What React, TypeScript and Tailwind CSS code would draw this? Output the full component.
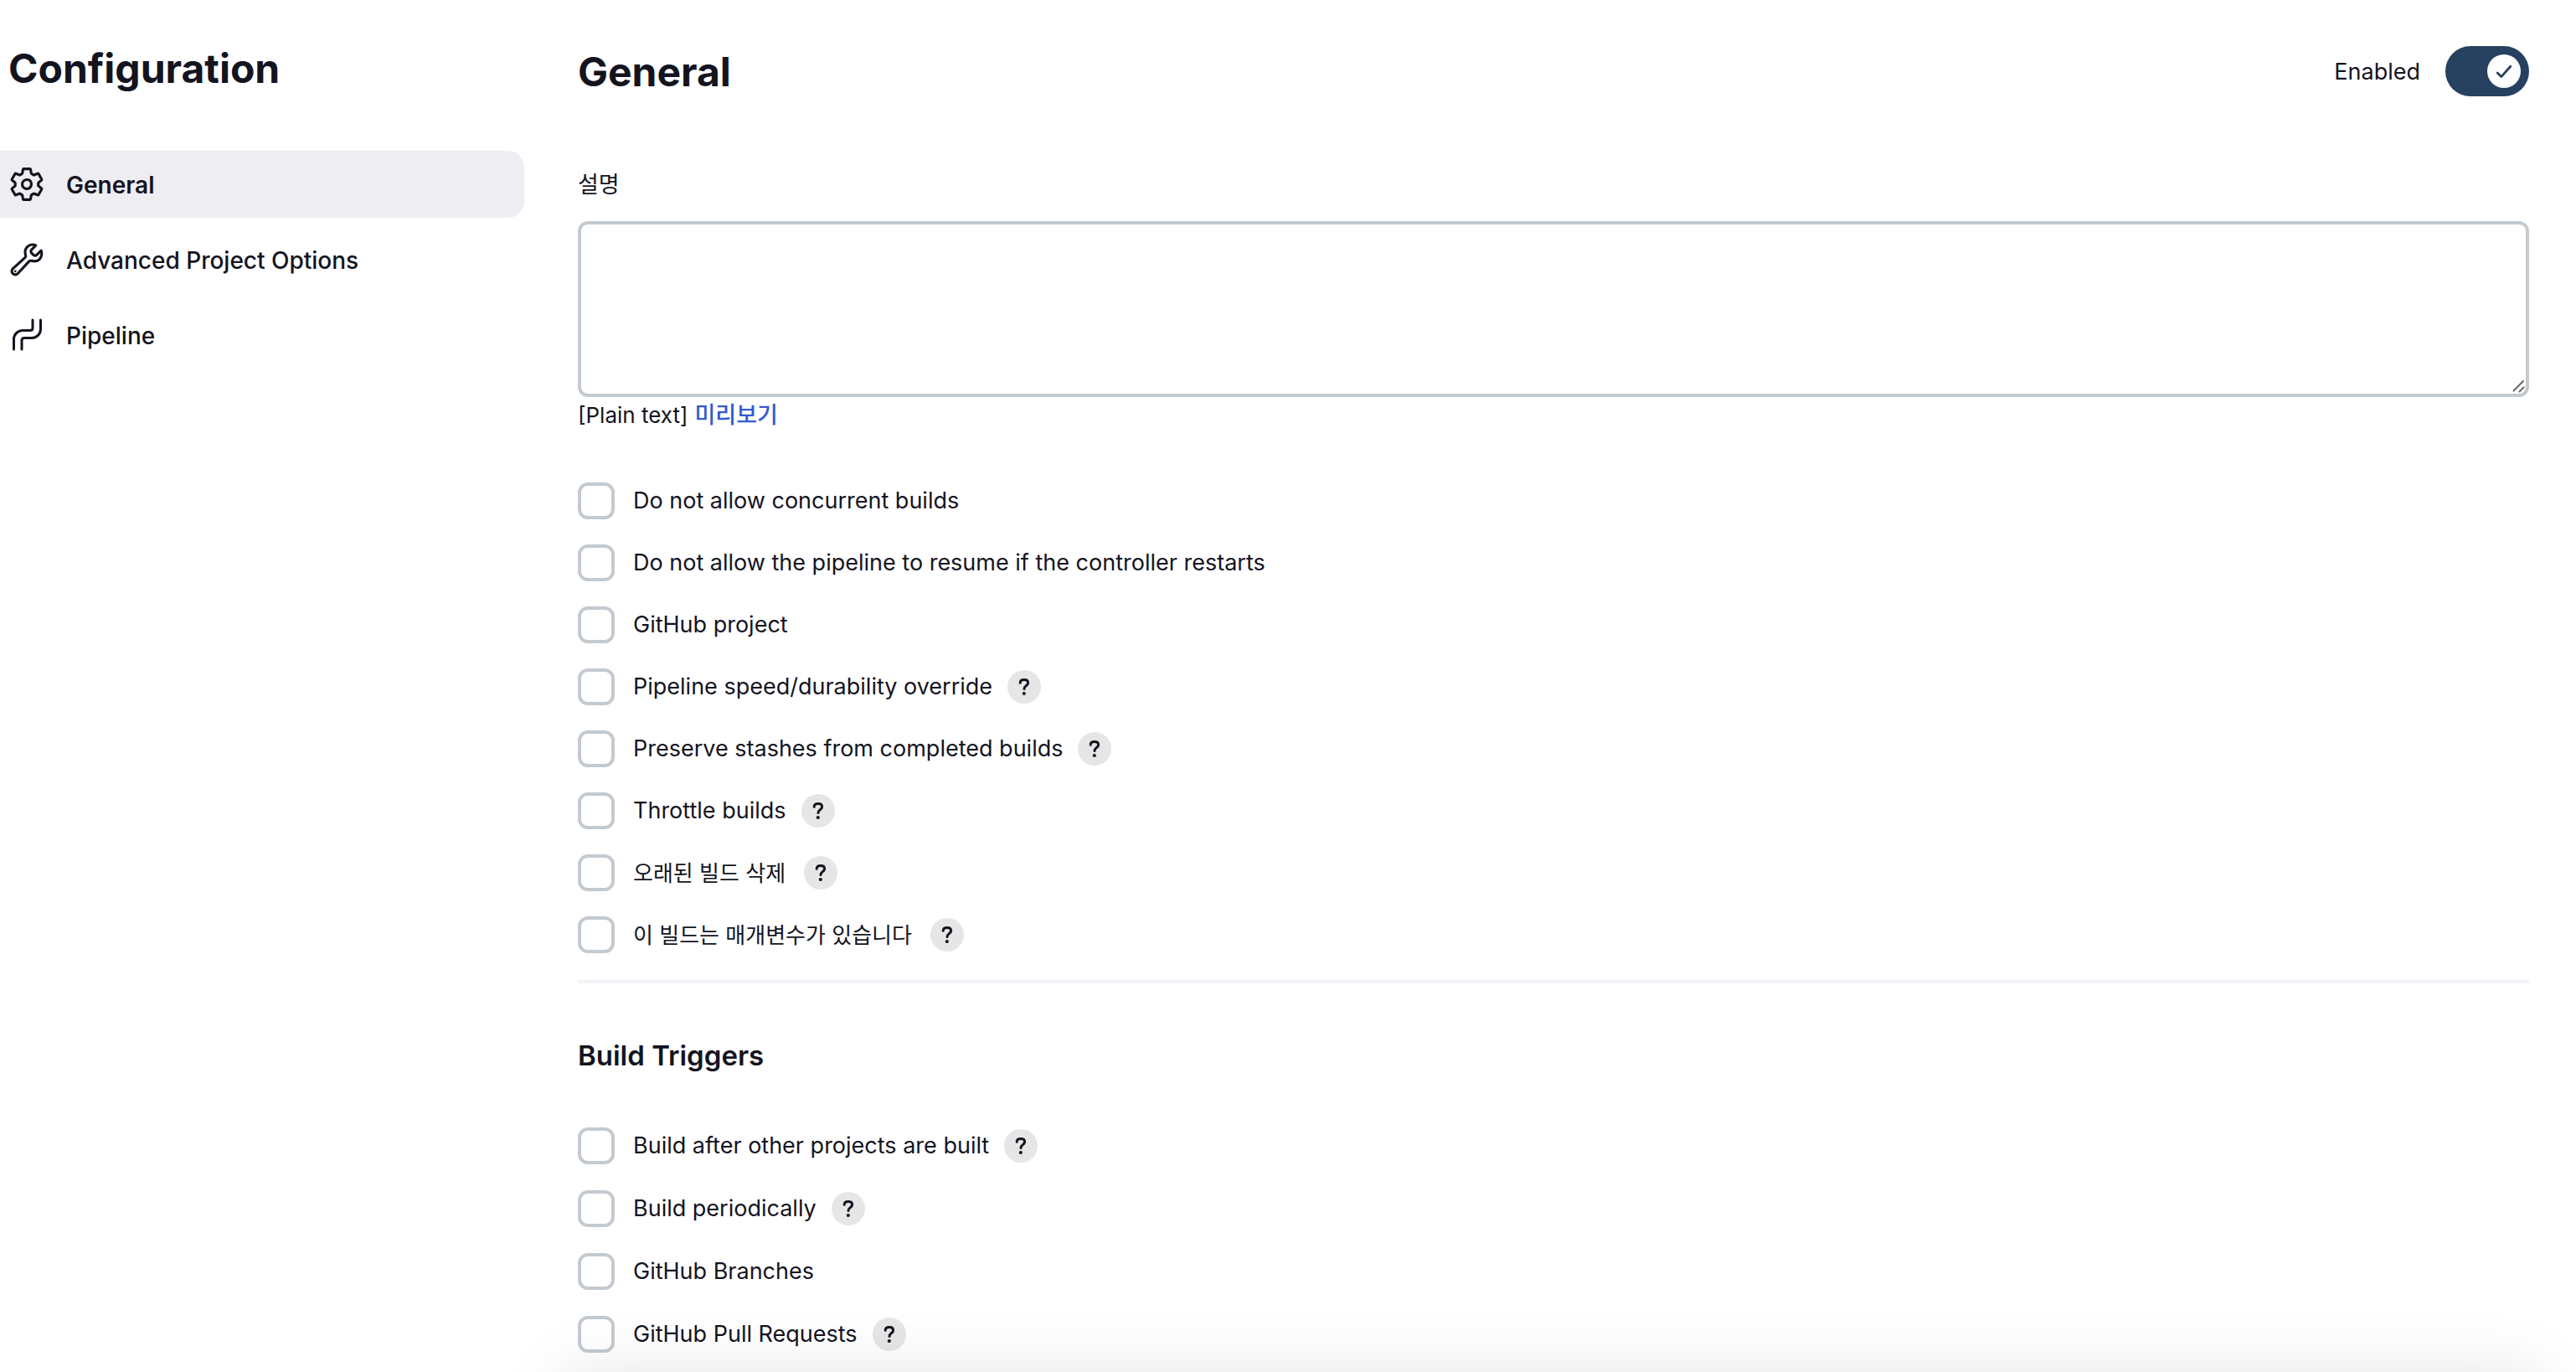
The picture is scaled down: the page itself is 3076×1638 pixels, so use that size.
import { useState, type ReactNode } from "react";
import { IoBuildOutline, IoSettingsOutline } from "react-icons/io5";

type Option = { label: string; help?: boolean; korean?: boolean };

const generalOptions: Option[] = [
  { label: "Do not allow concurrent builds" },
  { label: "Do not allow the pipeline to resume if the controller restarts" },
  { label: "GitHub project" },
  { label: "Pipeline speed/durability override", help: true },
  { label: "Preserve stashes from completed builds", help: true },
  { label: "Throttle builds", help: true },
  { label: "오래된 빌드 삭제", help: true, korean: true },
  { label: "이 빌드는 매개변수가 있습니다", help: true, korean: true },
];

const triggerOptions: Option[] = [
  { label: "Build after other projects are built", help: true },
  { label: "Build periodically", help: true },
  { label: "GitHub Branches" },
  { label: "GitHub Pull Requests", help: true },
];

function PipelineIcon() {
  return (
    <svg
      viewBox="0 0 44 44"
      className="size-11"
      fill="none"
      stroke="currentColor"
      strokeWidth="3"
      strokeLinecap="round"
      aria-hidden="true"
    >
      <path d="M29 4V13.5Q29 16.5 26 16.5H17A10.5 10.5 0 0 0 6.5 27V39" />
      <path d="M38.5 4V15A10.5 10.5 0 0 1 28 25.5H19Q16 25.5 16 28.5V39" />
    </svg>
  );
}

function NavItem({ icon, label, active }: { icon: ReactNode; label: string; active?: boolean }) {
  return (
    <li>
      <a
        href="#"
        aria-current={active ? "page" : undefined}
        className={
          active
            ? "flex h-20 items-center gap-[25px] rounded-r-[20px] bg-[#eeedf2] pl-2.5 text-[28px] font-semibold"
            : "flex h-20 items-center gap-[25px] rounded-r-[20px] pl-2.5 text-[28px] font-medium"
        }
      >
        {icon}
        <span className="pt-0.5">{label}</span>
      </a>
    </li>
  );
}

function OptionRow({ label, help, korean }: Option) {
  return (
    <div className="flex h-11 items-center gap-[18px]">
      <label className="flex items-center gap-[22px]">
        <input
          type="checkbox"
          className="size-11 shrink-0 appearance-none rounded-xl border-4 border-[#c3cad0] bg-white checked:bg-[#26415f]"
        />
        <span className={korean ? "pr-1 text-[26px]" : "text-[27px]"}>{label}</span>
      </label>
      {help && (
        <button
          type="button"
          aria-label={`Help for feature: ${label}`}
          className="flex size-10 items-center justify-center rounded-full bg-[#e6e6e6] text-[#14141f]"
        >
          <svg viewBox="0 0 40 40" className="size-10" fill="none" aria-hidden="true">
            <path
              d="M15.2 15.2C15.2 12.6 17.2 11.4 20 11.4S24.6 12.8 24.6 15.2C24.6 18.6 20 18.8 20 22.4"
              stroke="currentColor"
              strokeWidth="3"
              strokeLinecap="round"
              strokeLinejoin="round"
            />
            <circle cx="19.8" cy="28" r="2.1" fill="currentColor" />
          </svg>
        </button>
      )}
    </div>
  );
}

export default function App() {
  const [enabled, setEnabled] = useState(true);

  return (
    <div className="flex h-screen overflow-hidden bg-white font-['Inter','Noto_Sans_CJK_KR',sans-serif] text-[#14141f]">
      <aside className="w-[626px] shrink-0 pt-[50px]">
        <h1 className="pl-2.5 text-[48px] leading-[64px] font-bold">Configuration</h1>
        <nav aria-label="Configuration" className="mt-[66px]">
          <ul className="flex flex-col gap-2.5">
            <NavItem
              active
              label="General"
              icon={<IoSettingsOutline className="size-11 [&_path]:stroke-[36px]" />}
            />
            <NavItem
              label="Advanced Project Options"
              icon={<IoBuildOutline className="size-11 [&_path]:stroke-[36px]" />}
            />
            <NavItem label="Pipeline" icon={<PipelineIcon />} />
          </ul>
        </nav>
      </aside>

      <main className="min-w-0 flex-1 pt-[55px] pr-14 pl-16">
        <header className="flex h-[60px] items-center justify-between">
          <h2 className="pt-0.5 text-[48px] font-bold">General</h2>
          <label className="flex items-center gap-[30px] text-[27px]">
            <span className="pt-0.5">Enabled</span>
            <span className="relative flex">
              <input
                type="checkbox"
                role="switch"
                checked={enabled}
                onChange={(e) => setEnabled(e.target.checked)}
                className="h-[60px] w-[100px] appearance-none rounded-full bg-[#c3cad0] checked:bg-[#26415f]"
              />
              <svg
                viewBox="0 0 40 40"
                className={
                  enabled
                    ? "pointer-events-none absolute top-2.5 right-2.5 size-10 rounded-full bg-white text-[#26415f]"
                    : "pointer-events-none absolute top-2.5 left-2.5 size-10 rounded-full bg-white text-transparent"
                }
                fill="none"
                aria-hidden="true"
              >
                <path
                  d="M12.2 22L16.8 26.6L27.8 14.2"
                  stroke="currentColor"
                  strokeWidth="2.8"
                  strokeLinecap="round"
                  strokeLinejoin="round"
                />
              </svg>
            </span>
          </label>
        </header>

        <label htmlFor="description" className="mt-[86px] block text-[27px] leading-10">
          설명
        </label>
        <div className="relative mt-[23px]">
          <textarea
            id="description"
            className="block h-[210px] w-full resize-none rounded-xl border-4 border-[#c3cad0] bg-white p-4 text-[27px] outline-none"
          />
          <svg
            viewBox="0 0 16 16"
            className="pointer-events-none absolute right-1 bottom-1 size-4"
            stroke="#666666"
            strokeWidth="2"
            strokeLinecap="round"
            aria-hidden="true"
          >
            <path d="M1.5 12.5L13 1M8.5 13.5L13.5 8.5" />
          </svg>
        </div>
        <div className="flex items-center gap-2 leading-[44px]">
          <span className="text-[26px]">[Plain text]</span>
          <a href="#" className="text-[27px] font-medium text-[#335bd0]">
            미리보기
          </a>
        </div>

        <section aria-label="General options" className="mt-[58px] flex flex-col gap-[30px]">
          {generalOptions.map((option) => (
            <OptionRow key={option.label} {...option} />
          ))}
        </section>

        <hr className="mt-[32px] border-t-4 border-[#f3f3f8]" />

        <h2 className="mt-[66px] text-[33px] leading-10 font-semibold">Build Triggers</h2>
        <section aria-label="Build Triggers" className="mt-[66px] flex flex-col gap-[31px]">
          {triggerOptions.map((option) => (
            <OptionRow key={option.label} {...option} />
          ))}
        </section>
      </main>

      <div className="pointer-events-none fixed right-10 -bottom-20 left-[670px] h-20 shadow-[0_0_80px_rgba(0,0,0,0.1)]" />
    </div>
  );
}
